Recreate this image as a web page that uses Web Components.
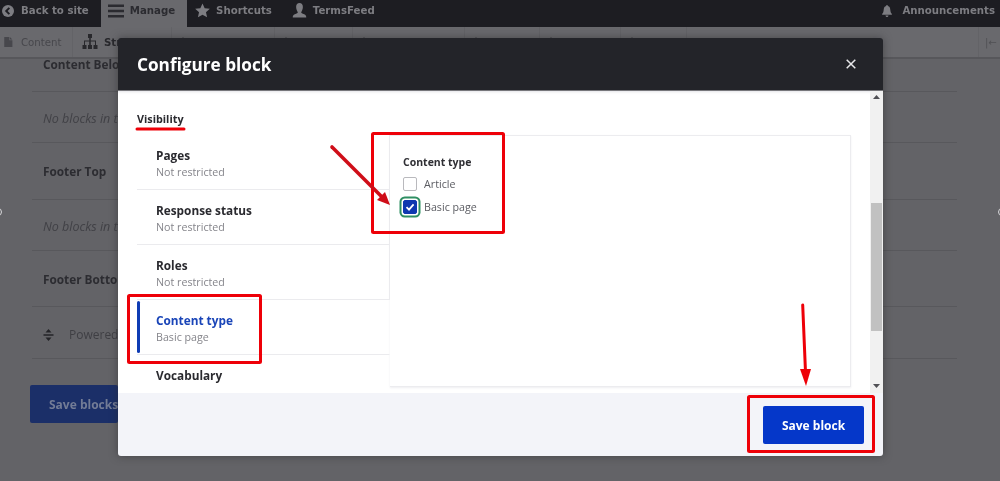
<!DOCTYPE html>
<html lang="en">
<head>
<meta charset="utf-8">
<title>Configure block</title>
<style>
  html, body { margin: 0; background: #626266; }
</style>
</head>
<body>
<layout-page></layout-page>

<script>
// icon shapes used all over the page, drawn on a 16 unit box
const ICONS = {
  back: '<circle cx="8" cy="8" r="8"/><path d="M9.800 3.800 5.600 8l4.200 4.200" fill="none" stroke="#1d1d22" stroke-width="2.600"/>',
  bars: '<path d="M0 1.500h16v2.400H0zM0 6.800h16v2.400H0zM0 12.100h16v2.400H0z"/>',
  star: '<path d="m8 .5 2.300 5 5.500.6-4.100 3.700 1.200 5.400L8 12.400 3.100 15.200l1.200-5.400L.2 6.100l5.500-.6z"/>',
  user: '<path d="M8 0c2.200 0 3.600 1.700 3.600 4.200S10.200 9 9.800 9.900c-.2.900 1.200 1.400 3.200 2.200 1.600.6 2.200 1.500 2.200 3.400H.8c0-1.900.6-2.800 2.200-3.400 2-.8 3.400-1.300 3.200-2.200C5.800 9 4.400 6.700 4.400 4.200S5.800 0 8 0z"/>',
  bell: '<path d="M8 0c.8 0 1.200.5 1.200 1.200 2.300.6 3 2.500 3.200 5 .2 2.700.7 4.200 2.100 5.600v1.100H1.500v-1.100C2.900 10.400 3.400 8.900 3.600 6.200c.2-2.500.9-4.400 3.200-5C6.800.5 7.200 0 8 0zM6 14h4c0 1.200-.9 2-2 2s-2-.8-2-2z"/>',
  page: '<path d="M2 0h8v5h5v11H2zM11 0l4 4h-4z"/>',
  tree: '<path d="M6 0h4v4H8.800v2.500H14V11h1.500v4h-4v-4H13V7.500H8.800V11H10v4H6v-4h1.200V7.500H3V11h1.500v4h-4v-4H2V6.500h5.200V4H6z"/>',
  tip: '<path d="M8 0l3 5H5z"/>'
};

const icon = (name, size) => `<svg viewBox="0 0 16 16" width="${size}" height="${size}" fill="currentColor" aria-hidden="true">${ICONS[name]}</svg>`;

// one tab of the dark top bar
class ToolbarTab extends HTMLElement {
  constructor() {
    super();
    this.attachShadow({ mode: 'open' });
  }
  connectedCallback() {
    this.shadowRoot.innerHTML = `
      <style>
        :host {
          display: flex; align-items: center; gap: var(--gap, 6px);
          height: 27px; box-sizing: border-box; padding: var(--pad, 0 12px 0 8px);
          background: var(--bg, transparent); color: var(--ink, #7d7d82);
          font: bold 10.200px "DejaVu Sans", sans-serif;
        }
        .in { display: flex; align-items: center; gap: var(--gap, 6px); margin-top: -6px; }
        svg { width: var(--icon, 15px); height: var(--icon, 15px); flex: none; }
      </style>
      <div class="in">${icon(this.getAttribute('icon'), 16)}<slot></slot></div>`;
  }
}

// top bar, holds the tabs
class AdminToolbar extends HTMLElement {
  constructor() {
    super();
    this.attachShadow({ mode: 'open' }).innerHTML = `
      <style>:host { display: flex; height: 27px; background: #1d1d22; }</style>
      <slot></slot>`;
  }
}

// an entry in the light tray. most of them are only an icon tip peeking out above the dialog
class TrayItem extends HTMLElement {
  constructor() {
    super();
    this.attachShadow({ mode: 'open' });
  }
  connectedCallback() {
    const name = this.getAttribute('icon') || 'tip';
    this.shadowRoot.innerHTML = `
      <style>
        :host {
          display: flex; align-items: center; gap: var(--gap, 6px);
          width: var(--w, 78px); box-sizing: border-box; padding-left: var(--icon-x, 6px);
          border-right: 1px solid #636367; color: var(--ink, #2c2c30);
          font: var(--weight, normal) 10.200px "DejaVu Sans", sans-serif; white-space: nowrap;
        }
        svg { width: var(--icon, 10px); height: var(--icon, 14px); flex: none; }
      </style>
      ${icon(name, 16)}<slot></slot>`;
  }
}

class AdminTray extends HTMLElement {
  constructor() {
    super();
    this.attachShadow({ mode: 'open' }).innerHTML = `
      <style>
        :host {
          display: flex; height: 32px; box-sizing: border-box;
          background: #69696d; border-bottom: 2px solid #57575b;
        }
        .end {
          margin-left: auto; width: 22px; box-sizing: border-box; padding-left: 6px; border-left: 1px solid #636367;
          display: flex; align-items: center; color: #505054; font: 10px "DejaVu Sans", sans-serif; white-space: nowrap;
        }
      </style>
      <slot></slot>
      <div class="end">|←</div>`;
  }
}

// a row of the block layout table behind the dialog
class RegionRow extends HTMLElement {
  constructor() {
    super();
    this.attachShadow({ mode: 'open' }).innerHTML = `
      <style>
        :host {
          display: flex; align-items: center; box-sizing: border-box;
          height: var(--h, 51px); padding: var(--pt, 0) 0 var(--pb, 0) 11px;
          border-bottom: 1px solid #58585c; color: #3f3f44;
          font: 12px "Open Sans", sans-serif; white-space: nowrap;
        }
        :host([kind="head"]) { font-weight: bold; font-size: 11.800px; color: #2c2c31; }
        :host([kind="empty"]) { font-style: italic; font-size: 12.500px; color: #414146; }
        /* the dialog covers the rest of the label */
        .label { width: var(--clip, 75px); overflow: hidden; }
      </style>
      <slot name="handle"></slot>
      <div class="label"><slot></slot></div>`;
  }
}

// drag handle in the Powered row
class DragHandle extends HTMLElement {
  constructor() {
    super();
    this.attachShadow({ mode: 'open' }).innerHTML = `
      <style>:host { display: inline-flex; width: 26px; color: #242428; }</style>
      <svg width="11" height="12" viewBox="0 0 11 12" fill="currentColor">
        <path d="M5.500 0l3 3.400h-6zM.5 5.200h10v1.600H.5zM5.500 12l-3-3.400h6z"/>
      </svg>`;
  }
}

class BlockTable extends HTMLElement {
  constructor() {
    super();
    this.attachShadow({ mode: 'open' }).innerHTML = `
      <style>
        :host { display: block; padding: 0 43px 0 32px; }
        .save {
          display: flex; align-items: center; width: 88px; height: 38px; margin: 26px 0 0 -2px;
          box-sizing: border-box; padding-left: 19px; border-radius: 2px; white-space: nowrap;
          background: #1b2f68; color: #737c96; font: bold 12px "Open Sans", sans-serif;
        }
      </style>
      <slot></slot>
      <div class="save">Save blocks</div>`;
  }
}

// left column entry of the vertical tabs
class VerticalTab extends HTMLElement {
  constructor() {
    super();
    this.attachShadow({ mode: 'open' }).innerHTML = `
      <style>
        :host {
          display: block; height: 55px; box-sizing: border-box; padding: 12px 0 0 19px;
          border-bottom: 1px solid #ebebee; border-right: 1px solid #ebebee;
          color: #2a2a2f; font: bold 11.800px/17px "Open Sans", sans-serif; position: relative;
        }
        :host([active]) { color: #1a45b8; border-right-color: transparent; }
        :host([active])::before {
          content: ""; position: absolute; left: 0; top: 1px; bottom: 1px; width: 3px;
          background: #0f3cb4; border-radius: 2px;
        }
        :host([plain]) { border: 0; }
        .sub { font-weight: normal; font-size: 10.700px; line-height: 16px; color: #85858b; }
      </style>
      <div><slot></slot></div>
      <div class="sub"><slot name="sub"></slot></div>`;
  }
}

class CheckOption extends HTMLElement {
  constructor() {
    super();
    this.attachShadow({ mode: 'open' }).innerHTML = `
      <style>
        :host {
          display: flex; align-items: center; gap: 7px; height: 23px;
          color: #5b5c62; font: 10.700px "Open Sans", sans-serif;
        }
        .box {
          width: 14px; height: 14px; box-sizing: border-box; flex: none;
          border: 1px solid #b9b9bd; border-radius: 2px; background: #fff;
        }
        :host([checked]) .box {
          background: #0f38b0; border-color: #0f38b0; color: #fff;
          box-shadow: 0 0 0 1.500px #fff, 0 0 0 3.500px #2f8f63;
        }
        svg { display: none; }
        :host([checked]) svg { display: block; }
      </style>
      <div class="box">
        <svg viewBox="0 0 12 12" width="12" height="12" fill="none" stroke="currentColor" stroke-width="1.800">
          <path d="M2.500 6.200 5 8.600 9.600 3.400"/>
        </svg>
      </div>
      <slot></slot>`;
  }
}

// the modal itself
class ConfigDialog extends HTMLElement {
  constructor() {
    super();
    this.attachShadow({ mode: 'open' }).innerHTML = `
      <style>
        :host {
          position: absolute; left: 118px; top: 38px; width: 765px; height: 418px;
          display: flex; flex-direction: column; border-radius: 3px; overflow: hidden;
          box-shadow: 0 0 8px rgba(40,40,44,.55); font-family: "Open Sans", sans-serif;
        }
        header {
          flex: none; height: 53px; box-sizing: border-box; padding: 0 27px 0 19px;
          display: flex; align-items: center; justify-content: space-between;
          background: #232429; color: #fff; border-bottom: 1px solid #77777b;
          font-size: 17.200px; font-weight: bold;
        }
        header svg { display: block; }
        .body { flex: 1; min-height: 0; display: flex; background: #fff; }
        .scroll { flex: 1; min-width: 0; padding: 19px 19px 0; box-shadow: inset 0 4px 3px -3px #e4e4e8; }
        .legend { font-weight: bold; font-size: 10.800px; line-height: 18px; color: #2a2a2f; height: 25px; }
        .tabs { display: flex; height: 252px; }
        .nav { flex: none; width: 253px; overflow: hidden; }
        .pane {
          flex: 1; padding: 17px 13px 0; box-sizing: border-box;
          border: 1px solid #ececef; border-left: 0; box-shadow: 0 1px 2px #eeeef1;
        }
        .pane h3 { margin: 0 0 1px; font-size: 10.500px; line-height: 18px; color: #2f2f34; }
        .bar {
          flex: none; width: 13px; background: #f1f1f1; position: relative; color: #505055;
          display: flex; flex-direction: column; justify-content: space-between; align-items: center; padding: 4px 0 5px; box-sizing: border-box;
        }
        .thumb { position: absolute; left: 1px; right: 1px; top: 112px; height: 128px; background: #c1c1c1; }
        footer {
          flex: none; height: 63px; box-sizing: border-box; padding: 13px 19px 0 0;
          display: flex; justify-content: flex-end; background: #f3f4f9;
        }
        button {
          width: 101px; height: 38px; border: 0; border-radius: 2px; background: #0537c9; color: #fff;
          font: bold 12px "Open Sans", sans-serif;
        }
      </style>
      <header>
        <span>Configure block</span>
        <svg width="10" height="10" viewBox="0 0 10 10" stroke="#e8e8ea" stroke-width="1.500"><path d="M.7.700l8.600 8.600M9.300.700.7 9.300"/></svg>
      </header>
      <div class="body">
        <div class="scroll">
          <div class="legend">Visibility</div>
          <div class="tabs">
            <div class="nav"><slot name="nav"></slot></div>
            <div class="pane">
              <h3>Content type</h3>
              <slot name="pane"></slot>
            </div>
          </div>
        </div>
        <div class="bar">
          <svg width="7" height="4" viewBox="0 0 7 4" fill="currentColor"><path d="M3.500 0 7 4H0z"/></svg>
          <div class="thumb"></div>
          <svg width="7" height="4" viewBox="0 0 7 4" fill="currentColor"><path d="M0 0h7L3.500 4z"/></svg>
        </div>
      </div>
      <footer><button>Save block</button></footer>`;
  }
}

// the red marks somebody drew on top of the screenshot
class RedMarks extends HTMLElement {
  constructor() {
    super();
    this.attachShadow({ mode: 'open' }).innerHTML = `
      <style>
        :host { position: absolute; inset: 0; pointer-events: none; }
        svg { display: block; }
        rect { fill: none; stroke: #ee0008; stroke-width: 3; }
      </style>
      <svg width="1000" height="481" viewBox="0 0 1000 481">
        <path d="M137 129H184" stroke="#ee0008" stroke-width="3" stroke-linecap="round"/>
        <rect x="372.500" y="133.500" width="131" height="99" rx="1"/>
        <rect x="128.500" y="295.500" width="132" height="67" rx="1"/>
        <rect x="748.500" y="396.500" width="125" height="55" rx="1"/>
        <path d="M332 147 383 198" stroke="#cf0d18" stroke-width="3.600" stroke-linecap="round"/>
        <path d="M390 205 377 200 385 192z" fill="#cf0d18"/>
        <path d="M802.700 305 805.500 372" stroke="#ee0008" stroke-width="3" stroke-linecap="round"/>
        <path d="M806 386 800 369H811z" fill="#ee0008"/>
      </svg>`;
  }
}

// the whole window: bars, table behind, dialog over it
class LayoutPage extends HTMLElement {
  constructor() {
    super();
    this.attachShadow({ mode: 'open' }).innerHTML = `
      <style>
        :host {
          display: block; position: relative; width: 1000px; height: 481px; overflow: hidden;
          background: #636367; filter: blur(.5px);
        }
        toolbar-tab.back { --pad: 0 12px 0 2px; --icon: 12px; --gap: 7px; }
        toolbar-tab.manage { --bg: #69696d; --ink: #2b2b30; --pad: 0 12px 0 7px; --icon: 16px; }
        toolbar-tab.end { --pad: 0 5px 0 0; --icon: 12px; --gap: 9px; margin-left: auto; }
        tray-item.content { --w: 73px; --ink: #47474c; --icon-x: 3px; --gap: 8px; }
        tray-item.structure { --w: 99px; --ink: #28282c; --icon-x: 9px; --gap: 6px; --icon: 16px; --weight: bold; }
        .peg { position: absolute; top: 208px; width: 8px; height: 8px; border: 1px solid #d8d8da; border-radius: 50%; box-sizing: border-box; }
        .peg.l { left: -6px; } .peg.r { right: -6px; }
      </style>
      <admin-toolbar>
        <toolbar-tab class="back" icon="back">Back to site</toolbar-tab>
        <toolbar-tab class="manage" icon="bars">Manage</toolbar-tab>
        <toolbar-tab icon="star">Shortcuts</toolbar-tab>
        <toolbar-tab icon="user">TermsFeed</toolbar-tab>
        <toolbar-tab class="end" icon="bell">Announcements</toolbar-tab>
      </admin-toolbar>
      <admin-tray>
        <tray-item class="content" icon="page">Content</tray-item>
        <tray-item class="structure" icon="tree">Structure</tray-item>
        <tray-item style="--w:103px"></tray-item>
        <tray-item style="--w:78px"></tray-item>
        <tray-item style="--w:112px"></tray-item>
        <tray-item style="--w:75px"></tray-item>
        <tray-item style="--w:81px"></tray-item>
        <tray-item style="--w:66px"></tray-item>
      </admin-tray>
      <block-table>
        <region-row kind="head" style="--h:33px;--pb:22px">Content Below</region-row>
        <region-row kind="empty" style="--pt:2px">No blocks in t</region-row>
        <region-row kind="head" style="--h:57px">Footer Top</region-row>
        <region-row kind="empty" style="--pt:2px">No blocks in t</region-row>
        <region-row kind="head" style="--h:56px">Footer Bottom</region-row>
        <region-row style="--h:52px;--clip:49px;--pt:4px"><drag-handle slot="handle"></drag-handle>Powered</region-row>
      </block-table>
      <span class="peg l"></span><span class="peg r"></span>
      <config-dialog>
        <vertical-tab slot="nav">Pages<span slot="sub">Not restricted</span></vertical-tab>
        <vertical-tab slot="nav">Response status<span slot="sub">Not restricted</span></vertical-tab>
        <vertical-tab slot="nav">Roles<span slot="sub">Not restricted</span></vertical-tab>
        <vertical-tab slot="nav" active>Content type<span slot="sub">Basic page</span></vertical-tab>
        <vertical-tab slot="nav" plain>Vocabulary</vertical-tab>
        <check-option slot="pane">Article</check-option>
        <check-option slot="pane" checked>Basic page</check-option>
      </config-dialog>
      <red-marks></red-marks>`;
  }
}

customElements.define('toolbar-tab', ToolbarTab);
customElements.define('admin-toolbar', AdminToolbar);
customElements.define('tray-item', TrayItem);
customElements.define('admin-tray', AdminTray);
customElements.define('region-row', RegionRow);
customElements.define('drag-handle', DragHandle);
customElements.define('block-table', BlockTable);
customElements.define('vertical-tab', VerticalTab);
customElements.define('check-option', CheckOption);
customElements.define('config-dialog', ConfigDialog);
customElements.define('red-marks', RedMarks);
customElements.define('layout-page', LayoutPage);
</script>
</body>
</html>
